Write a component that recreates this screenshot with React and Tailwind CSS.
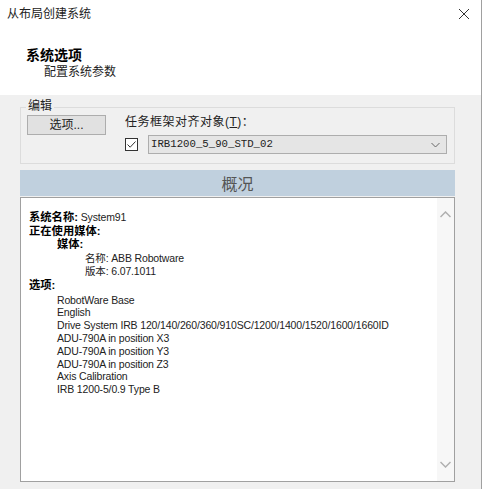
import React from "react";

const cjk = '"Liberation Sans", "Noto Sans CJK SC", sans-serif';

export default function App() {
  return (
    <div
      className="w-[482px] h-[489px] bg-[#f0f0f0] border-r border-[#a0a0a0] flex flex-col overflow-hidden text-black"
      style={{ fontFamily: cjk }}
    >
      {/* header */}
      <div className="h-[95px] bg-white flex flex-col shrink-0">
        <div className="flex items-center justify-between h-[28px] pl-[7px] pr-[10px]">
          <span className="text-[12px] leading-none text-[#222]">从布局创建系统</span>
          <svg width="12" height="12" viewBox="0 0 12 12" className="mr-[1px]">
            <path d="M1 1 L11 11 M11 1 L1 11" stroke="#333" strokeWidth="1" />
          </svg>
        </div>
        <div className="pl-[26px] mt-[19px] text-[14px] font-bold leading-[16px]">系统选项</div>
        <div className="pl-[44px] mt-[2px] text-[12px] leading-[14px] text-[#222]">配置系统参数</div>
      </div>

      {/* body */}
      <div className="flex flex-col pl-[20px] pr-[26px]">
        {/* group box */}
        <div className="relative mt-[12px] h-[57px] border border-[#dcdcdc]">
          <span className="absolute left-[5px] top-[-9px] bg-[#f0f0f0] px-[2px] text-[12px] leading-[14px] text-[#222]">
            编辑
          </span>
          <div className="flex pt-[7px] pl-[6px]">
            <button className="w-[79px] h-[20px] bg-[#e1e1e1] border border-[#adadad] text-[12px] leading-none text-[#222] flex items-center justify-center">
              选项...
            </button>
            <div className="ml-[19px] flex flex-col">
              <span className="text-[12px] leading-[14px] mt-[0px] text-[#222] tracking-[0.5px]">任务框架对齐对象(<span className="underline">T</span>)：</span>
              <div className="flex items-center mt-[6px]">
                <div className="w-[13px] h-[13px] border border-[#333] bg-white flex items-center justify-center">
                  <svg width="11" height="11" viewBox="0 0 11 11">
                    <path d="M1.5 5.5 L4.2 8.2 L9.5 2.5" stroke="#333" strokeWidth="1" fill="none" />
                  </svg>
                </div>
                <div className="ml-[10px] w-[299px] h-[19px] bg-[#e5e5e5] border border-[#adadad] flex items-center justify-between pl-[2px] pr-[6px]">
                  <span
                    className="text-[10.7px] leading-none text-[#222]"
                    style={{ fontFamily: '"Liberation Mono", monospace' }}
                  >
                    IRB1200_5_90_STD_02
                  </span>
                  <svg width="9" height="6" viewBox="0 0 9 6">
                    <path d="M0.5 1 L4.5 5 L8.5 1" stroke="#666" strokeWidth="1" fill="none" />
                  </svg>
                </div>
              </div>
            </div>
          </div>
        </div>

        {/* overview bar */}
        <div className="mt-[6px] h-[26px] bg-[#c0d0de] flex items-center justify-center">
          <span className="text-[16px] leading-none text-[#555]" style={{ fontFamily: '"Noto Sans CJK SC", serif' }}>概况</span>
        </div>

        {/* text box */}
        <div className="mt-[1px] h-[285px] bg-white border border-[#a0a0a0] flex">
          <div className="flex-1 pl-[8px] pt-[13px] text-[10.5px] tracking-[-0.15px] text-[#222]">
            <div className="leading-[13.6px]">
              <div><b className="text-black text-[11.3px] tracking-normal">系统名称:</b> System91</div>
              <div><b className="text-black text-[11.3px] tracking-normal">正在使用媒体:</b></div>
              <div className="pl-[28px]"><b className="text-black text-[11.3px] tracking-normal">媒体:</b></div>
              <div className="pl-[56px]">名称: ABB Robotware</div>
              <div className="pl-[56px]">版本: 6.07.1011</div>
              <div><b className="text-black text-[11.3px] tracking-normal">选项:</b></div>
            </div>
            <div className="pl-[28px] mt-[1px] leading-[12.8px]">
              <div>RobotWare Base</div>
              <div>English</div>
              <div>Drive System IRB 120/140/260/360/910SC/1200/1400/1520/1600/1660ID</div>
              <div>ADU-790A in position X3</div>
              <div>ADU-790A in position Y3</div>
              <div>ADU-790A in position Z3</div>
              <div>Axis Calibration</div>
              <div>IRB 1200-5/0.9 Type B</div>
            </div>
          </div>
          <div className="w-[17px] bg-[#f7f7f7] flex flex-col items-center justify-between py-[13px]">
            <svg width="11" height="7" viewBox="0 0 11 7">
              <path d="M0.5 6 L5.5 1 L10.5 6" stroke="#b0b0b0" strokeWidth="1.5" fill="none" />
            </svg>
            <svg width="11" height="7" viewBox="0 0 11 7">
              <path d="M0.5 1 L5.5 6 L10.5 1" stroke="#b0b0b0" strokeWidth="1.5" fill="none" />
            </svg>
          </div>
        </div>
      </div>
    </div>
  );
}
